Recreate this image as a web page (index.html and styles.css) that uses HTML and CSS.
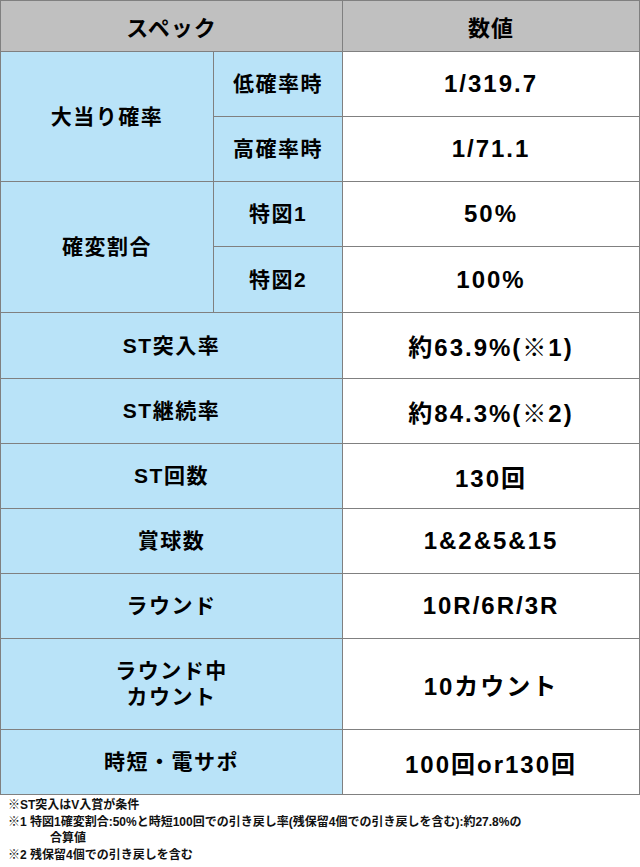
FILE: index.html
```html
<!DOCTYPE html>
<html lang="ja">
<head>
<meta charset="utf-8">
<title>スペック</title>
<link rel="stylesheet" href="styles.css">
</head>
<body>
<div class="spec">
  <div class="cell head span2">スペック</div>
  <div class="cell head">数値</div>

  <div class="cell label rows2">大当り確率</div>
  <div class="cell label">低確率時</div>
  <div class="cell value">1/319.7</div>
  <div class="cell label">高確率時</div>
  <div class="cell value">1/71.1</div>

  <div class="cell label rows2">確変割合</div>
  <div class="cell label">特図1</div>
  <div class="cell value">50%</div>
  <div class="cell label">特図2</div>
  <div class="cell value">100%</div>

  <div class="cell label span2">ST突入率</div>
  <div class="cell value">約63.9%(※1)</div>
  <div class="cell label span2">ST継続率</div>
  <div class="cell value">約84.3%(※2)</div>
  <div class="cell label span2">ST回数</div>
  <div class="cell value">130回</div>
  <div class="cell label span2">賞球数</div>
  <div class="cell value">1&amp;2&amp;5&amp;15</div>
  <div class="cell label span2">ラウンド</div>
  <div class="cell value">10R/6R/3R</div>
  <div class="cell label span2 two">ラウンド中<br>カウント</div>
  <div class="cell value">10カウント</div>
  <div class="cell label span2">時短・電サポ</div>
  <div class="cell value">100回or130回</div>
</div>
<div class="notes">
  <p>※ST突入はV入賞が条件</p>
  <p>※1 特図1確変割合:50%と時短100回での引き戻し率(残保留4個での引き戻しを含む):約27.8%の<br><span class="indent">合算値</span></p>
  <p>※2 残保留4個での引き戻しを含む</p>
</div>
</body>
</html>
```
FILE: styles.css
```css
html, body {
  margin: 0;
  padding: 0;
  background: #ffffff;
}
body {
  width: 640px;
  font-family: "Liberation Sans", "Noto Sans CJK JP", sans-serif;
  font-weight: bold;
  color: #000000;
}
.spec {
  display: grid;
  grid-template-columns: 212px 128px 296px;
  grid-template-rows: 50px 64px 64px 64px 65px 65px 64px 64px 64px 64px 90px 64px;
  gap: 1px;
  padding: 1px;
  background: #808080;
  width: 640px;
  box-sizing: border-box;
}
.cell {
  display: flex;
  align-items: center;
  justify-content: center;
  text-align: center;
}
.head {
  background: #c0c0c0;
  font-size: 22px;
  letter-spacing: 1px;
}
.label {
  background: #b9e3f8;
  font-size: 21px;
  line-height: 26px;
  letter-spacing: 1.5px;
}
.value {
  background: #ffffff;
  font-size: 24px;
  letter-spacing: 2px;
}
.span2 {
  grid-column: span 2;
}
.rows2 {
  grid-row: span 2;
}
.notes {
  padding: 2px 0 0 8px;
  font-size: 12px;
  line-height: 16.5px;
  color: #111111;
}
.notes p {
  margin: 0;
}
.indent {
  padding-left: 42px;
}
```
